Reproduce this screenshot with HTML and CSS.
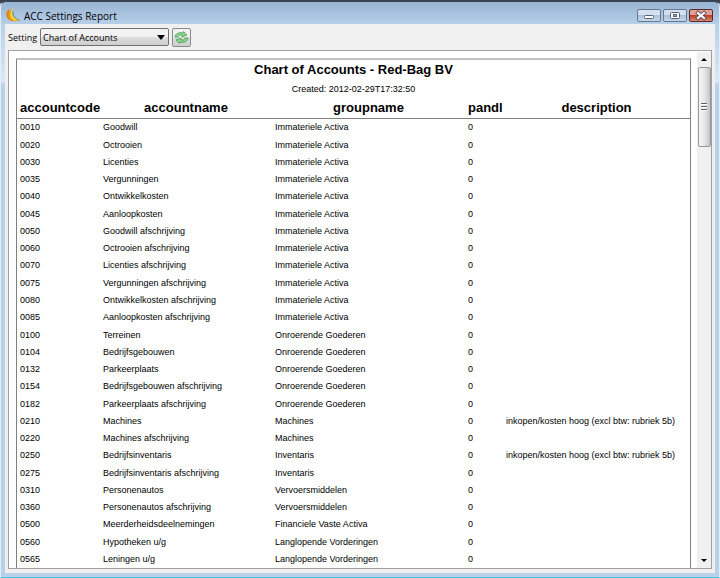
FILE: index.html
```html
<!DOCTYPE html>
<html lang="en">
<head>
<meta charset="utf-8">
<title>ACC Settings Report</title>
<link rel="stylesheet" href="styles.css">
</head>
<body>
<div class="window">
  <header class="titlebar">
    <svg class="logo" viewBox="0 0 14 14" aria-hidden="true">
      <path d="M3 1C-1.500 5 0 12 6 13L12 13C6 11 4 6 3 1Z" fill="#d9820c"/>
      <path d="M7 0C3 5 4 11 13 12.500C8 14.500 2.500 12 2.500 7C2.500 4 5 1 7 0Z" fill="#f0a414"/>
      <path d="M7.500 0C4 5 6 11 13.500 12.500C9 13.500 4.500 11 4.500 6.500C4.500 4 6 1 7.500 0Z" fill="#fbdc2c"/>
      <path d="M7 3.500C6.500 8 9 11 13.500 12.500" fill="none" stroke="#7a6a14" stroke-width=".8"/>
    </svg>
    <h1 class="window-title">ACC Settings Report</h1>
    <div class="window-controls">
      <button class="control" aria-label="Minimize"><svg viewBox="0 0 22 11"><rect x="6.500" y="5.500" width="9" height="3" rx="1" fill="#fff" stroke="#596273"/></svg></button>
      <button class="control" aria-label="Maximize"><svg viewBox="0 0 22 11"><rect x="6.500" y="2.500" width="9" height="6" rx="1" fill="#fff" stroke="#596273"/><rect x="9.500" y="4.500" width="3" height="2" fill="#9bb0c9" stroke="#596273"/></svg></button>
      <button class="control close" aria-label="Close"><svg viewBox="0 0 22 11"><path d="M8 3L14 8M14 3L8 8" stroke="#5c4a55" stroke-width="4" stroke-linecap="square"/><path d="M8 3L14 8M14 3L8 8" stroke="#fff" stroke-width="2.200" stroke-linecap="square"/></svg></button>
    </div>
  </header>
  <main class="content">
    <div class="toolbar">
      <label for="setting">Setting</label>
      <div class="select-wrap">
        <select id="setting"><option>Chart of Accounts</option></select>
        <svg class="arrow" viewBox="0 0 8 5" aria-hidden="true"><path d="M0 0H8L4 5Z"/></svg>
      </div>
      <button class="refresh" aria-label="Refresh">
        <svg viewBox="0 0 15 13"><g fill="#8ed68e" stroke="#3f9a4a" stroke-width=".8" stroke-linejoin="round"><path d="M1 6C1.300 2.500 5 1 9 2L9.500 .6L13 4L8 6L8.500 4.400C6 3.600 4.500 4 4 6Z"/><path d="M14 7C13.700 10.500 10 12 6 11L5.500 12.400L2 9L7 7L6.500 8.600C9 9.400 10.500 9 11 7Z"/></g></svg>
      </button>
    </div>
    <section class="viewport">
      <article class="report">
        <h2>Chart of Accounts - Red-Bag BV</h2>
        <p>Created: 2012-02-29T17:32:50</p>
        <table>
          <colgroup><col class="code"><col class="name"><col class="group"><col class="pandl"><col></colgroup>
          <thead><tr><th>accountcode</th><th>accountname</th><th>groupname</th><th>pandl</th><th>description</th></tr></thead>
          <tbody>
            <tr><td>0010</td><td>Goodwill</td><td>Immateriele Activa</td><td>0</td><td></td></tr>
            <tr><td>0020</td><td>Octrooien</td><td>Immateriele Activa</td><td>0</td><td></td></tr>
            <tr><td>0030</td><td>Licenties</td><td>Immateriele Activa</td><td>0</td><td></td></tr>
            <tr><td>0035</td><td>Vergunningen</td><td>Immateriele Activa</td><td>0</td><td></td></tr>
            <tr><td>0040</td><td>Ontwikkelkosten</td><td>Immateriele Activa</td><td>0</td><td></td></tr>
            <tr><td>0045</td><td>Aanloopkosten</td><td>Immateriele Activa</td><td>0</td><td></td></tr>
            <tr><td>0050</td><td>Goodwill afschrijving</td><td>Immateriele Activa</td><td>0</td><td></td></tr>
            <tr><td>0060</td><td>Octrooien afschrijving</td><td>Immateriele Activa</td><td>0</td><td></td></tr>
            <tr><td>0070</td><td>Licenties afschrijving</td><td>Immateriele Activa</td><td>0</td><td></td></tr>
            <tr><td>0075</td><td>Vergunningen afschrijving</td><td>Immateriele Activa</td><td>0</td><td></td></tr>
            <tr><td>0080</td><td>Ontwikkelkosten afschrijving</td><td>Immateriele Activa</td><td>0</td><td></td></tr>
            <tr><td>0085</td><td>Aanloopkosten afschrijving</td><td>Immateriele Activa</td><td>0</td><td></td></tr>
            <tr><td>0100</td><td>Terreinen</td><td>Onroerende Goederen</td><td>0</td><td></td></tr>
            <tr><td>0104</td><td>Bedrijfsgebouwen</td><td>Onroerende Goederen</td><td>0</td><td></td></tr>
            <tr><td>0132</td><td>Parkeerplaats</td><td>Onroerende Goederen</td><td>0</td><td></td></tr>
            <tr><td>0154</td><td>Bedrijfsgebouwen afschrijving</td><td>Onroerende Goederen</td><td>0</td><td></td></tr>
            <tr><td>0182</td><td>Parkeerplaats afschrijving</td><td>Onroerende Goederen</td><td>0</td><td></td></tr>
            <tr><td>0210</td><td>Machines</td><td>Machines</td><td>0</td><td>inkopen/kosten hoog (excl btw: rubriek 5b)</td></tr>
            <tr><td>0220</td><td>Machines afschrijving</td><td>Machines</td><td>0</td><td></td></tr>
            <tr><td>0250</td><td>Bedrijfsinventaris</td><td>Inventaris</td><td>0</td><td>inkopen/kosten hoog (excl btw: rubriek 5b)</td></tr>
            <tr><td>0275</td><td>Bedrijfsinventaris afschrijving</td><td>Inventaris</td><td>0</td><td></td></tr>
            <tr><td>0310</td><td>Personenautos</td><td>Vervoersmiddelen</td><td>0</td><td></td></tr>
            <tr><td>0360</td><td>Personenautos afschrijving</td><td>Vervoersmiddelen</td><td>0</td><td></td></tr>
            <tr><td>0500</td><td>Meerderheidsdeelnemingen</td><td>Financiele Vaste Activa</td><td>0</td><td></td></tr>
            <tr><td>0560</td><td>Hypotheken u/g</td><td>Langlopende Vorderingen</td><td>0</td><td></td></tr>
            <tr><td>0565</td><td>Leningen u/g</td><td>Langlopende Vorderingen</td><td>0</td><td></td></tr>
          </tbody>
        </table>
      </article>
      <div class="scrollbar">
        <button class="step" aria-label="Scroll up"><svg viewBox="0 0 6 3"><path d="M0 3L3 0L6 3Z"/></svg></button>
        <div class="thumb"><i></i><i></i><i></i></div>
        <button class="step down" aria-label="Scroll down"><svg viewBox="0 0 6 3"><path d="M0 0H6L3 3Z"/></svg></button>
      </div>
    </section>
  </main>
</div>
</body>
</html>
```
FILE: styles.css
```css
* { box-sizing: border-box; }
html, body { height: 100%; }
body {
  margin: 0;
  overflow: hidden;
  background: #3a4450;
  color: #000;
  font-family: "Open Sans", sans-serif;
  font-size: 9px;
}
h1, h2, p { margin: 0; }
button { margin: 0; padding: 0; }
svg { display: block; }

.window {
  display: flex;
  flex-direction: column;
  height: 100vh;
  padding: 0 4px 4px;
  border: 1px solid #e4eef8;
  border-top: 2px solid #3a4450;
  border-bottom-color: #3fc4e4;
  border-radius: 6px 6px 0 0;
  background: linear-gradient(#98b4d3, #b9d1ea 24px, #dce8f5 80px, #b9d1ea 82px);
}
.titlebar { display: flex; align-items: center; flex: none; height: 22px; }
.logo { width: 14px; height: 14px; margin: 4px 4px 0 1px; }
.window-title { margin-top: 6px; font-size: 10px; font-weight: 400; line-height: 16px; }
.window-controls { display: flex; gap: 2px; margin: 4px 2px 0 auto; }
.control {
  width: 24px;
  height: 13px;
  border: 1px solid #66778f;
  border-radius: 2px;
  background: linear-gradient(#d3e0ee 50%, #abc1d9 50%, #c5d8ea);
}
.close { border-color: #5b2b2b; background: linear-gradient(#e0a297 50%, #b93f27 50%, #d9896f); }

.content {
  display: flex;
  flex: 1;
  flex-direction: column;
  min-height: 0;
  padding: 0 3px 4px;
  background: #f0f0f0;
}
.toolbar { display: flex; align-items: center; gap: 3px; flex: none; height: 26px; }
.select-wrap { display: grid; align-items: center; width: 129px; }
.select-wrap > * { grid-area: 1 / 1; }
.arrow { width: 8px; height: 5px; margin-right: 4px; justify-self: end; pointer-events: none; }
select {
  width: 100%;
  height: 18px;
  padding: 0 2px;
  appearance: none;
  border: 1px solid #707070;
  border-radius: 2px;
  background: linear-gradient(#f2f2f2 50%, #dddddd 50%, #cfcfcf);
  color: #000;
  font: inherit;
}
.refresh {
  display: grid;
  place-items: center;
  width: 19px;
  height: 19px;
  border: 1px solid #8a8a8a;
  border-radius: 2px;
  background: linear-gradient(#f2f2f2 50%, #dddddd 50%, #cfcfcf);
}
.refresh svg { width: 15px; height: 13px; }

.viewport {
  display: flex;
  flex: 1;
  min-height: 0;
  border: 1px solid #a0a0a0;
  background: #fff;
}
.report {
  display: grid;
  grid-template-rows: auto auto 1fr;
  flex: 1;
  min-width: 0;
  margin: 7px 6px 0 7px;
  border: 1px solid #808080;
  border-top: 2px solid #c0c0c0;
  border-bottom: 0;
  font-family: "Liberation Sans", sans-serif;
  font-size: 9px;
  text-align: center;
}
.report h2 { font-size: 13px; line-height: 20px; }
.report p { line-height: 18px; }
table {
  width: 100%;
  height: 100%;
  border-collapse: collapse;
  table-layout: fixed;
  text-align: left;
}
.code { width: 83px; }
.name { width: 172px; }
.group { width: 193px; }
.pandl { width: 38px; }
th, td { padding: 0 3px; line-height: 12px; white-space: nowrap; }
th { height: 20px; border-bottom: 1px solid #808080; font-size: 13px; text-align: center; }

.scrollbar {
  display: flex;
  flex: none;
  flex-direction: column;
  align-items: center;
  width: 14px;
  margin-top: 1px;
  background: #f0f0f0;
}
.step {
  display: grid;
  place-items: center;
  width: 14px;
  height: 15px;
  border: 0;
  background: none;
}
.step svg { width: 6px; height: 3px; }
.down { margin-top: auto; }
.thumb {
  display: grid;
  align-content: center;
  justify-content: center;
  gap: 1px;
  width: 13px;
  height: 80px;
  border: 1px solid #979797;
  border-radius: 2px;
  background: linear-gradient(90deg, #f5f5f5, #e6e6e6 50%, #c4c4c8);
}
.thumb i { width: 6px; height: 2px; border-bottom: 1px solid #fff; background: #606060; }
```
